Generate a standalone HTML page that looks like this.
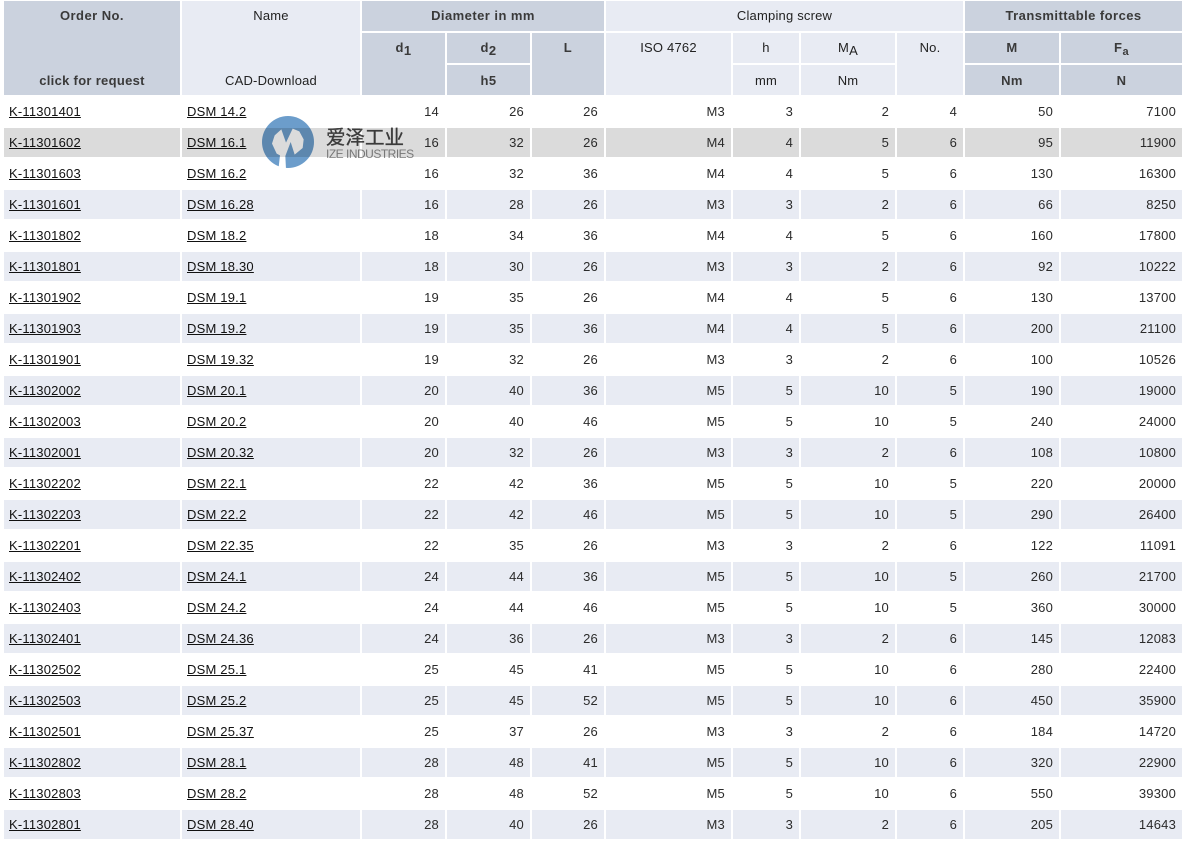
<!DOCTYPE html>
<html><head><meta charset="utf-8"><title>DSM</title>
<style>
html,body{margin:0;padding:0;background:#fff;width:1189px;height:842px;overflow:hidden}
body{font-family:"Liberation Sans","Noto Sans CJK SC",sans-serif;font-size:13px;color:#2b2b2b}
table{position:absolute;left:2px;top:-1px;border-collapse:separate;border-spacing:2px;table-layout:fixed;width:1182px}
td,th{padding:0;box-sizing:border-box;overflow:hidden;line-height:14px;white-space:nowrap}
thead td,thead th{height:30px;text-align:center;vertical-align:middle;position:relative;color:#222;font-weight:normal;letter-spacing:.2px}
thead td.d{background:#cbd2de;font-weight:bold;letter-spacing:.45px;color:#3a3a3a}
.l{background:#e8ebf3}
thead td.top{vertical-align:top;padding-top:8px}
thead td.low{padding-top:1px}
.tp{position:absolute;left:0;right:0;top:8px}
.bt{position:absolute;left:0;right:0;bottom:7px}
.bt.x{letter-spacing:.3px}
sub{font-size:13px;line-height:0;position:relative;top:3px;vertical-align:baseline}
sub.s{font-size:11px;top:3px}
tbody td{height:29px;text-align:right;padding-right:6px;vertical-align:middle;letter-spacing:.2px}
tbody td:nth-child(1),tbody td:nth-child(2){text-align:left;padding:0 0 0 5px}
tbody tr:nth-child(even) td{background:#e8ebf3}
tbody tr.h td{background:#dbdbdb}
a{color:#111;text-decoration:underline}
.wm{position:absolute;left:260px;top:112px;width:60px;height:60px;mix-blend-mode:multiply}
.cn{position:absolute;left:326px;top:124px;font-size:19.5px;line-height:24px;color:#444;-webkit-text-stroke:.35px #444;font-family:"Noto Sans CJK SC",sans-serif;white-space:nowrap;mix-blend-mode:multiply}
.en{position:absolute;left:326px;top:147px;font-size:12px;line-height:14px;color:#8a8a8a;letter-spacing:-.5px;white-space:nowrap;mix-blend-mode:multiply}
</style></head><body>
<table>
<colgroup><col style="width:176px"><col style="width:178px"><col style="width:83px"><col style="width:83px"><col style="width:72px"><col style="width:125px"><col style="width:66px"><col style="width:94px"><col style="width:66px"><col style="width:94px"><col style="width:121px"></colgroup>
<thead>
<tr><td class="d" rowspan="3"><span class="tp">Order No.</span><span class="bt x">click for request</span></td>
<td class="l" rowspan="3"><span class="tp">Name</span><span class="bt">CAD-Download</span></td>
<td class="d" colspan="3">Diameter in mm</td>
<td class="l" colspan="4">Clamping screw</td>
<td class="d" colspan="2">Transmittable forces</td></tr>
<tr><td class="d top" rowspan="2">d<sub>1</sub></td><td class="d">d<sub>2</sub></td><td class="d top" rowspan="2">L</td>
<td class="l top" rowspan="2">ISO 4762</td><td class="l">h</td><td class="l">M<sub>A</sub></td><td class="l top" rowspan="2">No.</td>
<td class="d">M</td><td class="d">F<sub class="s">a</sub></td></tr>
<tr><td class="d low">h5</td><td class="l low">mm</td><td class="l low">Nm</td><td class="d low">Nm</td><td class="d low">N</td></tr>
</thead>
<tbody>
<tr><td><a>K-11301401</a></td><td><a>DSM 14.2</a></td><td>14</td><td>26</td><td>26</td><td>M3</td><td>3</td><td>2</td><td>4</td><td>50</td><td>7100</td></tr>
<tr class="h"><td><a>K-11301602</a></td><td><a>DSM 16.1</a></td><td>16</td><td>32</td><td>26</td><td>M4</td><td>4</td><td>5</td><td>6</td><td>95</td><td>11900</td></tr>
<tr><td><a>K-11301603</a></td><td><a>DSM 16.2</a></td><td>16</td><td>32</td><td>36</td><td>M4</td><td>4</td><td>5</td><td>6</td><td>130</td><td>16300</td></tr>
<tr><td><a>K-11301601</a></td><td><a>DSM 16.28</a></td><td>16</td><td>28</td><td>26</td><td>M3</td><td>3</td><td>2</td><td>6</td><td>66</td><td>8250</td></tr>
<tr><td><a>K-11301802</a></td><td><a>DSM 18.2</a></td><td>18</td><td>34</td><td>36</td><td>M4</td><td>4</td><td>5</td><td>6</td><td>160</td><td>17800</td></tr>
<tr><td><a>K-11301801</a></td><td><a>DSM 18.30</a></td><td>18</td><td>30</td><td>26</td><td>M3</td><td>3</td><td>2</td><td>6</td><td>92</td><td>10222</td></tr>
<tr><td><a>K-11301902</a></td><td><a>DSM 19.1</a></td><td>19</td><td>35</td><td>26</td><td>M4</td><td>4</td><td>5</td><td>6</td><td>130</td><td>13700</td></tr>
<tr><td><a>K-11301903</a></td><td><a>DSM 19.2</a></td><td>19</td><td>35</td><td>36</td><td>M4</td><td>4</td><td>5</td><td>6</td><td>200</td><td>21100</td></tr>
<tr><td><a>K-11301901</a></td><td><a>DSM 19.32</a></td><td>19</td><td>32</td><td>26</td><td>M3</td><td>3</td><td>2</td><td>6</td><td>100</td><td>10526</td></tr>
<tr><td><a>K-11302002</a></td><td><a>DSM 20.1</a></td><td>20</td><td>40</td><td>36</td><td>M5</td><td>5</td><td>10</td><td>5</td><td>190</td><td>19000</td></tr>
<tr><td><a>K-11302003</a></td><td><a>DSM 20.2</a></td><td>20</td><td>40</td><td>46</td><td>M5</td><td>5</td><td>10</td><td>5</td><td>240</td><td>24000</td></tr>
<tr><td><a>K-11302001</a></td><td><a>DSM 20.32</a></td><td>20</td><td>32</td><td>26</td><td>M3</td><td>3</td><td>2</td><td>6</td><td>108</td><td>10800</td></tr>
<tr><td><a>K-11302202</a></td><td><a>DSM 22.1</a></td><td>22</td><td>42</td><td>36</td><td>M5</td><td>5</td><td>10</td><td>5</td><td>220</td><td>20000</td></tr>
<tr><td><a>K-11302203</a></td><td><a>DSM 22.2</a></td><td>22</td><td>42</td><td>46</td><td>M5</td><td>5</td><td>10</td><td>5</td><td>290</td><td>26400</td></tr>
<tr><td><a>K-11302201</a></td><td><a>DSM 22.35</a></td><td>22</td><td>35</td><td>26</td><td>M3</td><td>3</td><td>2</td><td>6</td><td>122</td><td>11091</td></tr>
<tr><td><a>K-11302402</a></td><td><a>DSM 24.1</a></td><td>24</td><td>44</td><td>36</td><td>M5</td><td>5</td><td>10</td><td>5</td><td>260</td><td>21700</td></tr>
<tr><td><a>K-11302403</a></td><td><a>DSM 24.2</a></td><td>24</td><td>44</td><td>46</td><td>M5</td><td>5</td><td>10</td><td>5</td><td>360</td><td>30000</td></tr>
<tr><td><a>K-11302401</a></td><td><a>DSM 24.36</a></td><td>24</td><td>36</td><td>26</td><td>M3</td><td>3</td><td>2</td><td>6</td><td>145</td><td>12083</td></tr>
<tr><td><a>K-11302502</a></td><td><a>DSM 25.1</a></td><td>25</td><td>45</td><td>41</td><td>M5</td><td>5</td><td>10</td><td>6</td><td>280</td><td>22400</td></tr>
<tr><td><a>K-11302503</a></td><td><a>DSM 25.2</a></td><td>25</td><td>45</td><td>52</td><td>M5</td><td>5</td><td>10</td><td>6</td><td>450</td><td>35900</td></tr>
<tr><td><a>K-11302501</a></td><td><a>DSM 25.37</a></td><td>25</td><td>37</td><td>26</td><td>M3</td><td>3</td><td>2</td><td>6</td><td>184</td><td>14720</td></tr>
<tr><td><a>K-11302802</a></td><td><a>DSM 28.1</a></td><td>28</td><td>48</td><td>41</td><td>M5</td><td>5</td><td>10</td><td>6</td><td>320</td><td>22900</td></tr>
<tr><td><a>K-11302803</a></td><td><a>DSM 28.2</a></td><td>28</td><td>48</td><td>52</td><td>M5</td><td>5</td><td>10</td><td>6</td><td>550</td><td>39300</td></tr>
<tr><td><a>K-11302801</a></td><td><a>DSM 28.40</a></td><td>28</td><td>40</td><td>26</td><td>M3</td><td>3</td><td>2</td><td>6</td><td>205</td><td>14643</td></tr>
</tbody>
</table>
<svg class="wm" viewBox="0 0 180 180" xmlns="http://www.w3.org/2000/svg">
<defs><mask id="m"><rect width="180" height="180" fill="#000"/><circle cx="84" cy="90" r="78" fill="#fff"/>
<polygon fill="#000" points="36,95 44,70 64,52 78,92 98,50 118,58 131,82 128,108 104,128 92,90 76,132 78,172 56,165 60,130 50,125"/></mask></defs>
<rect width="180" height="180" fill="#6c9dcb" mask="url(#m)"/>
</svg>
<div class="cn">爱泽工业</div>
<div class="en">IZE INDUSTRIES</div>
</body></html>
